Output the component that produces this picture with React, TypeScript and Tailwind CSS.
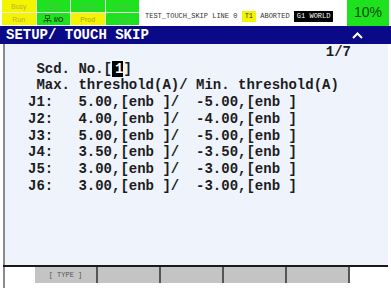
import React from 'react'

const mono = "font-['Liberation_Mono','Courier_New',monospace]"
const sans = "font-['Liberation_Sans',Arial,sans-serif]"

const lamps = [
  { label: 'Busy', bg: 'bg-[#f4f400]', fg: 'text-[#b8b23a]' },
  { label: 'Step', bg: 'bg-[#1de21d]', fg: 'text-[#56c056]' },
  { label: 'Hold', bg: 'bg-[#1de21d]', fg: 'text-[#56c056]' },
  { label: 'Fault', bg: 'bg-[#1de21d]', fg: 'text-[#56c056]' },
  { label: 'Run', bg: 'bg-[#f4f400]', fg: 'text-[#b8b23a]' },
  { label: 'I/O', bg: 'bg-[#1de21d]', fg: 'text-[#1a3a1a] font-bold', icon: true },
  { label: 'Prod', bg: 'bg-[#f4f400]', fg: 'text-[#a8a030]' },
  { label: 'TCyc', bg: 'bg-[#1de21d]', fg: 'text-[#56c056]' },
]

const rows = [
  ['J1:', '5.00', '-5.00'],
  ['J2:', '4.00', '-4.00'],
  ['J3:', '5.00', '-5.00'],
  ['J4:', '3.50', '-3.50'],
  ['J5:', '3.00', '-3.00'],
  ['J6:', '3.00', '-3.00'],
]

function IoIcon() {
  return (
    <svg width="9" height="8" viewBox="0 0 9 8" className="mr-[2px]">
      <rect x="2.5" y="0.5" width="4" height="3" fill="none" stroke="#1a5a1a" />
      <path d="M4.5 3.5v2M1 5.5h7M1 5.5v2M4.5 5.5v2M8 5.5v2" stroke="#1a5a1a" strokeWidth="1" fill="none" />
    </svg>
  )
}

export default function App() {
  return (
    <div className="relative h-[288px] w-[391px] overflow-hidden bg-white">
      {/* status strip */}
      <div className="flex h-[26px]">
        <div className="ml-[2px] grid h-[25px] w-[137px] grid-cols-4 grid-rows-2 gap-[1px] bg-[#e8e8e8]">
          {lamps.map((l) => (
            <div
              key={l.label}
              className={`flex items-center justify-center ${l.bg} ${l.fg} ${sans} text-[7px] leading-none`}
            >
              {l.icon && <IoIcon />}
              {l.label}
            </div>
          ))}
        </div>
        <div className={`flex flex-1 items-center pl-[6px] pt-[6px] ${mono} text-[7px] leading-none text-[#333]`}>
          <span className="whitespace-pre">TEST_TOUCH_SKIP LINE 0 </span>
          <span className="bg-[#f4f400] px-[3px] py-[2px]">T1</span>
          <span className="whitespace-pre"> ABORTED </span>
          <span className="bg-black px-[3px] py-[2px] whitespace-pre text-white">G1 WORLD</span>
        </div>
        <div className={`mr-[2px] flex w-[42px] items-center justify-center bg-[#1de21d] pb-[2px] ${sans} text-[14px] text-[#0d4a0d]`}>
          10%
        </div>
      </div>

      {/* title bar */}
      <div className="flex h-[18px] items-center justify-between bg-[#0a0a88] pl-[6px] pr-[28px]">
        <span className={`${mono} text-[14px] font-bold leading-none text-white`}>SETUP/ TOUCH SKIP</span>
        <svg width="11" height="7" viewBox="0 0 11 7">
          <path d="M1 6 L5.5 1.5 L10 6" stroke="white" strokeWidth="2" fill="none" />
        </svg>
      </div>

      {/* content */}
      <div
        className={`ml-[3px] mr-[3px] h-[221px] border-l-[2px] border-[#8a8a8a] bg-[#eff3fc] ${mono} text-[14px] font-bold leading-[16.7px] text-[#1c1c1c]`}
      >
        <div className="flex justify-end pr-[37px]">1/7</div>
        <div className="pl-[23px] whitespace-pre">
          <div>
            {' Scd. No.['}
            <span className="bg-black pl-[3px] text-white">1</span>
            {']'}
          </div>
          <div>{' Max. threshold(A)/ Min. threshold(A)'}</div>
          {rows.map(([j, max, min]) => (
            <div key={j}>{`${j}   ${max},[enb ]/  ${min},[enb ]`}</div>
          ))}
        </div>
      </div>

      {/* function keys */}
      <div className="ml-[3px] mr-[3px] h-[2px] bg-[#1a1a1a]" />
      <div className="flex h-[21px] border-l-[2px] border-[#8a8a8a] ml-[3px]">
        <div className="w-[30px]" />
        {['[ TYPE ]', '', '', '', ''].map((k, i) => (
          <div key={i} className="flex h-[16px] w-[63px] items-center justify-center border-r-[2px] border-[#555] bg-[#c4c4c4]">
            <span className={`${mono} text-[7px] whitespace-pre text-[#555]`}>{k}</span>
          </div>
        ))}
      </div>
    </div>
  )
}
